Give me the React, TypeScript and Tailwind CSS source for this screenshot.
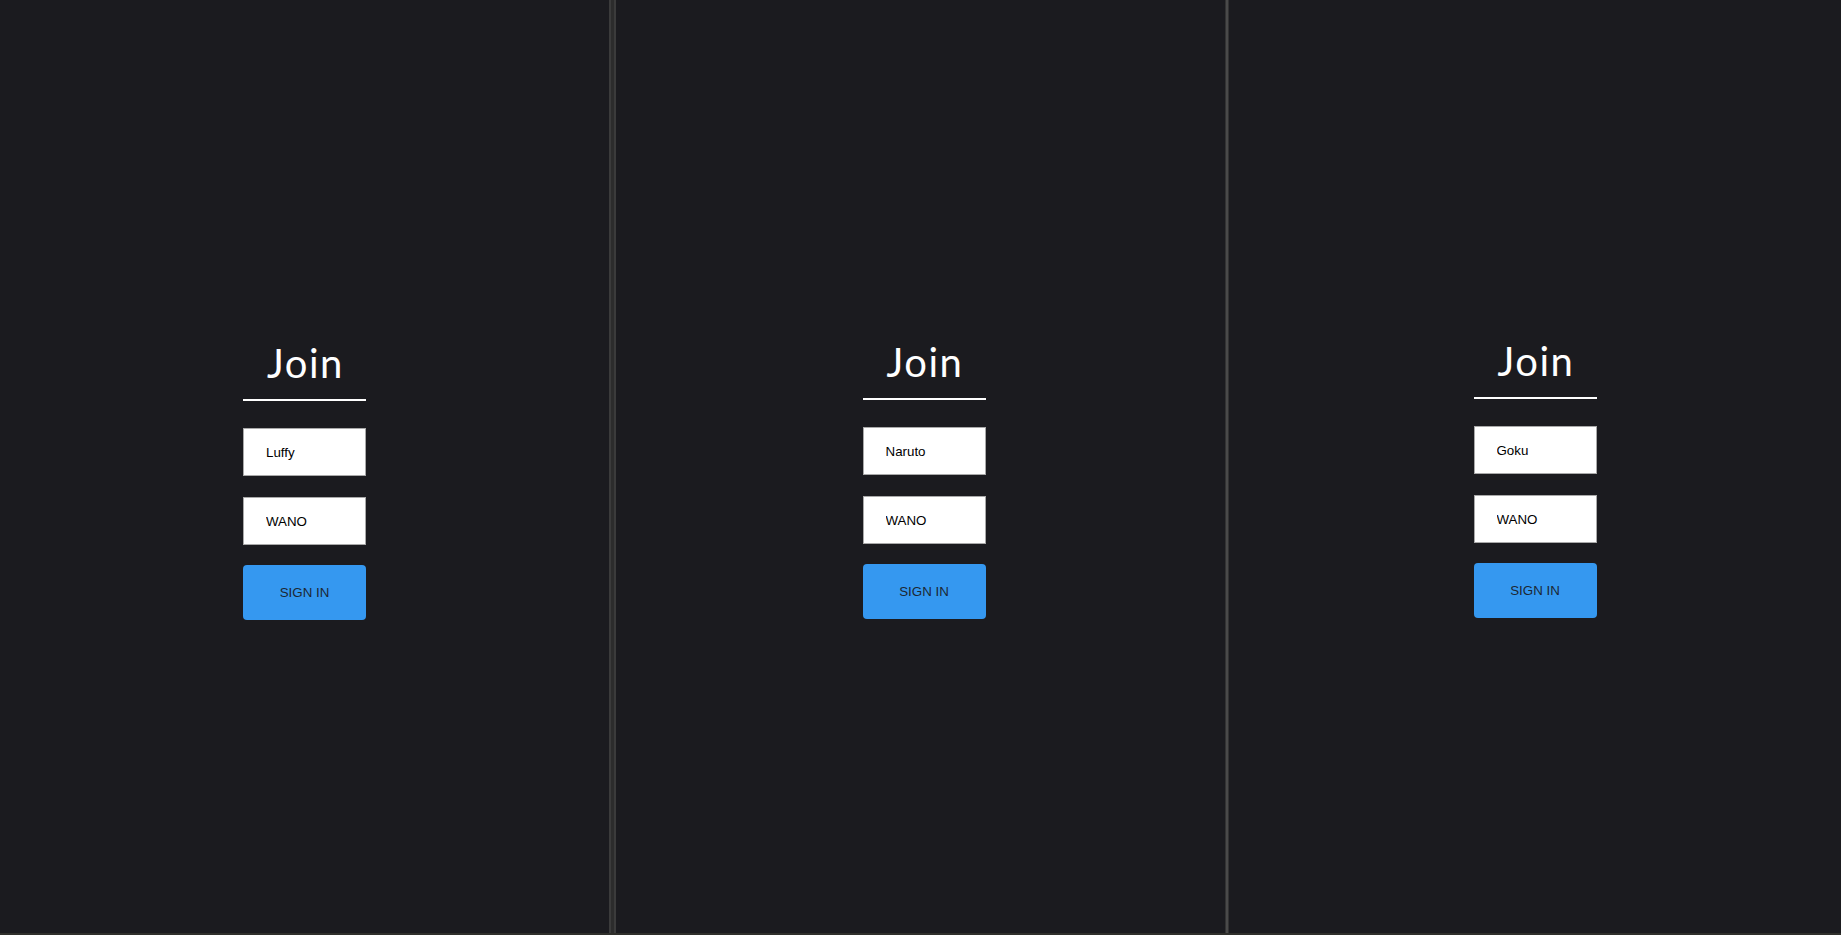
const users = [
  { name: "Luffy", room: "WANO", shift: "pt-[339px]", pad: "" },
  { name: "Naruto", room: "WANO", shift: "pt-[338px]", pad: "pl-[7px]" },
  { name: "Goku", room: "WANO", shift: "pt-[337px]", pad: "" },
];

function JoinForm({ name, room, shift, pad }: (typeof users)[number]) {
  return (
    <div className={`flex h-full flex-col items-center ${shift} ${pad}`}>
      <h1 className="w-[123px] border-b-2 border-white pb-[12px] pl-[2px] text-center font-['Lato',sans-serif] text-[40px] leading-[48px] font-normal tracking-[1.5px] text-white">
        Join
      </h1>
      <input
        className="mt-[27px] h-[48px] w-[123px] border border-[#a9a9a9] bg-white px-[22px] font-['Liberation_Sans',Arial,sans-serif] text-[13.33px] text-black outline-none"
        defaultValue={name}
      />
      <input
        className="mt-[21px] h-[48px] w-[123px] border border-[#a9a9a9] bg-white px-[22px] font-['Liberation_Sans',Arial,sans-serif] text-[13.33px] text-black outline-none"
        defaultValue={room}
      />
      <button
        type="button"
        className="mt-[20px] h-[55px] w-[123px] rounded-[4px] bg-[#3598f0] font-['Liberation_Sans',Arial,sans-serif] text-[13.33px] text-[#1c2733]"
      >
        SIGN IN
      </button>
    </div>
  );
}

export default function App() {
  return (
    <div className="flex h-screen flex-col bg-[#1b1b1f]">
      <div className="flex flex-1">
        <div className="w-[609px]">
          <JoinForm {...users[0]} />
        </div>
        <div className="w-[7px] border-x-2 border-[#3b3b3b] bg-[#2c2c2c]" />
        <div className="w-[609px]">
          <JoinForm {...users[1]} />
        </div>
        <div className="w-[4px] border-x border-[#333] bg-[#4a4a4a]" />
        <div className="flex-1">
          <JoinForm {...users[2]} />
        </div>
      </div>
      <div className="h-[2px] bg-[#2f2f2b]" />
    </div>
  );
}
